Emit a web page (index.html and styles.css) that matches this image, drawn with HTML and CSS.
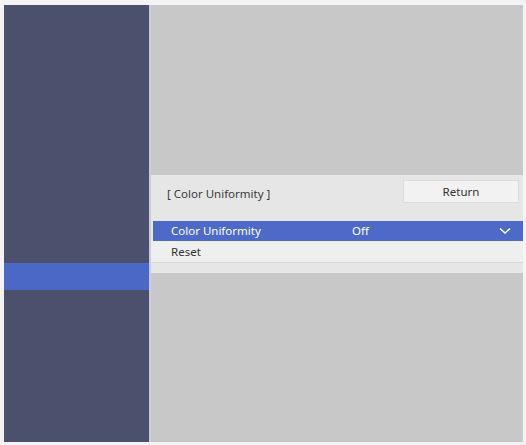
FILE: index.html
```html
<!DOCTYPE html>
<html lang="en">

<head>
    <meta charset="UTF-8">
    <meta name="viewport" content="width=device-width, initial-scale=1.0">
    <title>Color Uniformity</title>
    <link rel="stylesheet" href="styles.css">
</head>

<body>

    <div class="screen">
        <div class="side">
            <div class="side-item on"></div>
        </div>
        <div class="main">
            <div class="panel">
                <div class="panel-head">
                    <span class="panel-title">[ Color Uniformity ]</span>
                    <div class="btn">Return</div>
                </div>
                <div class="row on">
                    <span class="row-name">Color Uniformity</span>
                    <span class="row-val">Off</span>
                    <svg class="row-arrow" width="12" height="8" viewBox="0 0 12 8">
                        <path d="M1 1.5 L6 6 L11 1.5" fill="none" stroke="#fff" stroke-width="1.6" />
                    </svg>
                </div>
                <div class="row">
                    <span class="row-name">Reset</span>
                </div>
            </div>
        </div>
    </div>

</body>

</html>
```

FILE: styles.css
```css
* {
    margin: 0;
    padding: 0;
    box-sizing: border-box;
}

body {
    background: #f4f4f6;
    font-family: "Noto Sans", "Open Sans", sans-serif;
    font-size: 11.5px;
    color: #333;
}

.screen {
    display: flex;
    height: 445px;
    padding: 5px 3px 3px 4px;
}

/* 左侧菜单 */
.side {
    display: flex;
    flex-direction: column;
    width: 147px;
    background: #4b506d;
    border-right: 2px solid #c9ccda;
}

.side-item {
    height: 27px;
    margin-top: 258px;
}

.side-item.on {
    background: #4a68c6;
}

/* 右侧内容 */
.main {
    flex: 1;
    background: #c8c8c8;
    padding-top: 170px;
}

.panel {
    display: flex;
    flex-direction: column;
    height: 98px;
    background: #e6e6e6;
}

.panel-head {
    display: flex;
    align-items: flex-start;
    justify-content: space-between;
    height: 46px;
    padding: 5px 4px 0 16px;
}

.panel-title {
    margin-top: 6px;
    color: #3a3a3a;
}

.btn {
    width: 116px;
    height: 23px;
    line-height: 21px;
    text-align: center;
    background: #f2f2f2;
    border: 1px solid #dcdcdc;
    color: #333;
}

.row {
    display: flex;
    align-items: center;
    height: 22px;
    padding-left: 20px;
    background: #efefef;
    border-bottom: 1px solid #d8d8d8;
}

.row.on {
    height: 20px;
    margin-left: 2px;
    padding-bottom: 1px;
    background: #4d6ac9;
    color: #fff;
    border-bottom: none;
    padding-left: 18px;
}

.row-name {
    width: 181px;
}

.row-val {
    flex: 1;
}

.row-arrow {
    margin-right: 12px;
}
```
